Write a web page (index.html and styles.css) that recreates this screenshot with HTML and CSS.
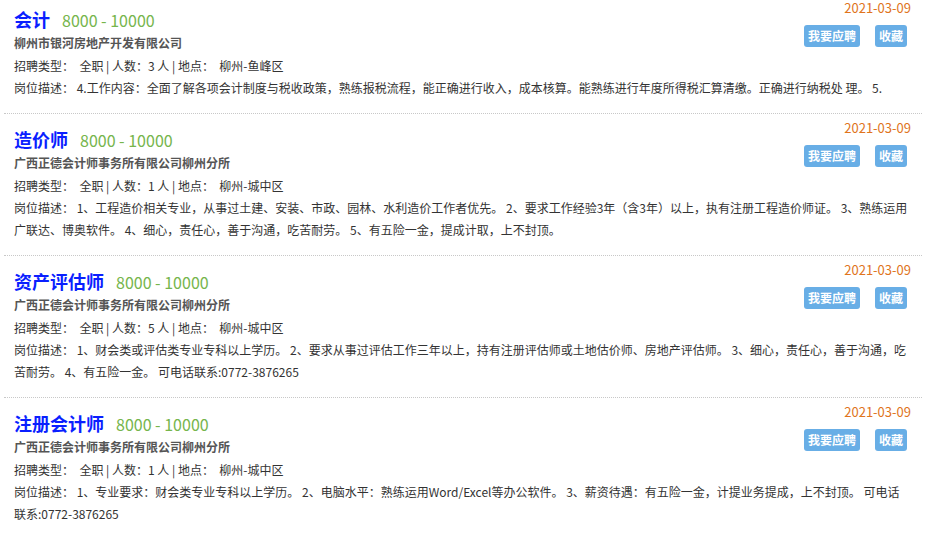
FILE: index.html
```html
<!DOCTYPE html>
<html lang="zh-CN">
<head>
  <meta charset="UTF-8" />
  <meta name="viewport" content="width=device-width, initial-scale=1.0" />
  <title>招聘信息</title>
  <link rel="stylesheet" href="styles.css">
</head>
<body>
  <!-- Job list -->
  <div class="job-list">

    <div class="job">
      <div class="job-head">
        <div class="job-info">
          <div class="job-title"><span class="name">会计</span><span class="salary">8000 - 10000</span></div>
          <div class="company">柳州市银河房地产开发有限公司</div>
          <div class="meta">招聘类型：&nbsp; 全职 | 人数：3 人 | 地点：&nbsp; 柳州-鱼峰区</div>
        </div>
        <div class="job-side">
          <div class="date">2021-03-09</div>
          <div class="actions">
            <span class="btn">我要应聘</span>
            <span class="btn">收藏</span>
          </div>
        </div>
      </div>
      <div class="desc">岗位描述： 4.工作内容：全面了解各项会计制度与税收政策，熟练报税流程，能正确进行收入，成本核算。能熟练进行年度所得税汇算清缴。正确进行纳税处 理。 5.</div>
    </div>

    <div class="job">
      <div class="job-head">
        <div class="job-info">
          <div class="job-title"><span class="name">造价师</span><span class="salary">8000 - 10000</span></div>
          <div class="company">广西正德会计师事务所有限公司柳州分所</div>
          <div class="meta">招聘类型：&nbsp; 全职 | 人数：1 人 | 地点：&nbsp; 柳州-城中区</div>
        </div>
        <div class="job-side">
          <div class="date">2021-03-09</div>
          <div class="actions">
            <span class="btn">我要应聘</span>
            <span class="btn">收藏</span>
          </div>
        </div>
      </div>
      <div class="desc">岗位描述： 1、工程造价相关专业，从事过土建、安装、市政、园林、水利造价工作者优先。 2、要求工作经验3年（含3年）以上，执有注册工程造价师证。 3、熟练运用广联达、博奥软件。 4、细心，责任心，善于沟通，吃苦耐劳。 5、有五险一金，提成计取，上不封顶。</div>
    </div>

    <div class="job">
      <div class="job-head">
        <div class="job-info">
          <div class="job-title"><span class="name">资产评估师</span><span class="salary">8000 - 10000</span></div>
          <div class="company">广西正德会计师事务所有限公司柳州分所</div>
          <div class="meta">招聘类型：&nbsp; 全职 | 人数：5 人 | 地点：&nbsp; 柳州-城中区</div>
        </div>
        <div class="job-side">
          <div class="date">2021-03-09</div>
          <div class="actions">
            <span class="btn">我要应聘</span>
            <span class="btn">收藏</span>
          </div>
        </div>
      </div>
      <div class="desc">岗位描述： 1、财会类或评估类专业专科以上学历。 2、要求从事过评估工作三年以上，持有注册评估师或土地估价师、房地产评估师。 3、细心，责任心，善于沟通，吃苦耐劳。 4、有五险一金。 可电话联系:0772-3876265</div>
    </div>

    <div class="job">
      <div class="job-head">
        <div class="job-info">
          <div class="job-title"><span class="name">注册会计师</span><span class="salary">8000 - 10000</span></div>
          <div class="company">广西正德会计师事务所有限公司柳州分所</div>
          <div class="meta">招聘类型：&nbsp; 全职 | 人数：1 人 | 地点：&nbsp; 柳州-城中区</div>
        </div>
        <div class="job-side">
          <div class="date">2021-03-09</div>
          <div class="actions">
            <span class="btn">我要应聘</span>
            <span class="btn">收藏</span>
          </div>
        </div>
      </div>
      <div class="desc">岗位描述： 1、专业要求：财会类专业专科以上学历。 2、电脑水平：熟练运用Word/Excel等办公软件。 3、薪资待遇：有五险一金，计提业务提成，上不封顶。 可电话联系:0772-3876265</div>
    </div>

  </div>
</body>
</html>
```

FILE: styles.css
```css
/* Base */
* {
  box-sizing: border-box;
  margin: 0;
  padding: 0;
}
body {
  background: #fff;
  color: #333;
  font-family: "Microsoft YaHei", "Noto Sans CJK SC", "Noto Sans", sans-serif;
  font-size: 12px;
}

/* List */
.job-list {
  margin: 0 14px 0 4px;
}
.job {
  padding: 7px 11px 14px 10px;
  border-bottom: 1px dotted #c8c8c8;
}
.job:first-child {
  padding-top: 1px;
  padding-bottom: 14px;
}
.job:last-child {
  border-bottom: none;
}

/* Header row */
.job-head {
  display: flex;
  justify-content: space-between;
  align-items: flex-start;
}
.job-info {
  margin-top: 6px;
}
.job-title {
  height: 25px;
  line-height: 24px;
}
.job-title .name {
  color: #0a1fff;
  font-size: 18px;
  font-weight: bold;
}
.job-title .salary {
  color: #76b54c;
  font-size: 16px;
  margin-left: 12px;
}
.company {
  color: #555;
  font-weight: bold;
  line-height: 22px;
}
.meta {
  line-height: 23px;
}

/* Right side */
.job-side {
  display: flex;
  flex-direction: column;
  align-items: flex-end;
}
.date {
  color: #e0741c;
  font-size: 13px;
  line-height: 14px;
}
.actions {
  display: flex;
  gap: 15px;
  margin-top: 10px;
  margin-right: 4px;
}
.btn {
  display: block;
  height: 22px;
  line-height: 22px;
  padding: 0 4px;
  background: #68aee6;
  color: #fff;
  font-weight: bold;
  border-radius: 3px;
  cursor: pointer;
}

/* Description */
.desc {
  line-height: 22px;
}
```
